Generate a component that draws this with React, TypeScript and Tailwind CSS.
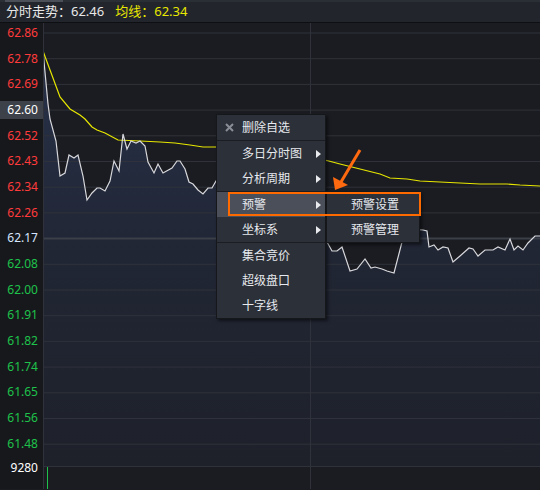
// page-coordinate points, converted to the chart svg below
const pricePts: [number, number][] = [
  [43, 52], [48, 105], [50, 120], [56, 142], [60, 177], [65, 174], [69, 156], [74, 159], [78, 156],
  [83, 177], [87, 201], [92, 194], [97, 189], [100, 189], [105, 192], [110, 182], [114, 162],
  [119, 172], [123, 135], [127, 150], [131, 142], [136, 144], [140, 142], [145, 147], [148, 163],
  [154, 174], [158, 165], [163, 174], [172, 169], [177, 162], [180, 162], [185, 170], [189, 183],
  [193, 185], [198, 191], [203, 195], [208, 189], [212, 189], [216, 182], [260, 210], [300, 235],
  [327, 243], [332, 252], [337, 252], [342, 248], [350, 272], [357, 270], [365, 260], [371, 269],
  [375, 268], [382, 270], [387, 272], [394, 274], [402, 243], [405, 230], [423, 231], [427, 232],
  [429, 248], [434, 246], [438, 251], [443, 248], [448, 249], [453, 263], [460, 257], [469, 249],
  [473, 250], [478, 257], [485, 251], [493, 251], [498, 248], [505, 251], [510, 240], [514, 251],
  [518, 247], [523, 251], [528, 244], [535, 237], [540, 237],
];

const avgPts: [number, number][] = [
  [43, 52], [60, 98], [70, 110], [80, 116], [85, 120], [92, 128], [97, 131], [105, 134], [118, 141],
  [140, 142], [160, 143], [175, 144], [190, 146], [203, 148], [216, 148], [325, 161], [340, 165],
  [360, 170], [380, 175], [390, 179], [407, 180], [420, 182], [440, 183], [460, 184], [480, 185],
  [507, 185], [520, 186], [540, 187],
];

const labels = [
  { v: '62.86', c: 'text-[#ff3b3b]' },
  { v: '62.78', c: 'text-[#ff3b3b]' },
  { v: '62.69', c: 'text-[#ff3b3b]' },
  { v: '62.60', c: 'text-white bg-[#3d4149]' },
  { v: '62.52', c: 'text-[#ff3b3b]' },
  { v: '62.43', c: 'text-[#ff3b3b]' },
  { v: '62.34', c: 'text-[#ff3b3b]' },
  { v: '62.26', c: 'text-[#ff3b3b]' },
  { v: '62.17', c: 'text-[#d6e6ff]' },
  { v: '62.08', c: 'text-[#1ec24b]' },
  { v: '62.00', c: 'text-[#1ec24b]' },
  { v: '61.91', c: 'text-[#1ec24b]' },
  { v: '61.82', c: 'text-[#1ec24b]' },
  { v: '61.74', c: 'text-[#1ec24b]' },
  { v: '61.65', c: 'text-[#1ec24b]' },
  { v: '61.56', c: 'text-[#1ec24b]' },
  { v: '61.48', c: 'text-[#1ec24b]' },
];

const OX = 44;
const OY = 24;
const toSvg = (pts: [number, number][]) => pts.map(([x, y]) => `${x - OX},${y - OY}`).join(' ');

function Caret() {
  return <span className="w-0 h-0 border-y-[4px] border-y-transparent border-l-[5px] border-l-[#e8eaee]" />;
}

function MenuItem({ label, sub, active }: { label: string; sub?: boolean; active?: boolean }) {
  return (
    <div className={`h-[25px] flex items-center pl-[25px] pr-[4px] ${active ? 'bg-[#4a4f59]' : ''}`}>
      <span className="flex-1 text-[12px] text-[#e6e9ee]">{label}</span>
      {sub && <Caret />}
    </div>
  );
}

function Sep() {
  return <div className="h-px bg-[#1b1d22]" />;
}

export default function App() {
  const gridYs = Array.from({ length: 17 }, (_, i) => 34 + i * 25.7);

  return (
    <div
      className="relative w-[540px] h-[490px] overflow-hidden bg-[#1b1c21] select-none"
      style={{ fontFamily: '"Noto Sans", "Noto Sans CJK SC", sans-serif' }}
    >
      {/* tab strip */}
      <div className="h-[2px] flex bg-[#2a2e35]">
        <div className="w-[58px] ml-[5px] bg-[#4a4f58]" />
      </div>

      {/* header */}
      <div className="h-[21px] flex items-center gap-[11px] px-[6px] bg-[#22252c] border-b border-[#0e0f12] text-[13px]">
        <span className="text-[#e8e8e8]">分时走势：62.46</span>
        <span className="text-[#e8e800]">均线：62.34</span>
      </div>

      <div className="flex h-[466px]">
        {/* price axis */}
        <div className="w-[44px] shrink-0 bg-[#17181c] border-r border-[#2f323a] flex flex-col">
          <div className="-mt-[3px] flex flex-col">
            {labels.map((l) => (
              <div key={l.v} className="h-[25.7px] flex items-center">
                <span className={`w-full h-[18px] flex items-center justify-end pr-[5px] text-[12px] ${l.c}`}>{l.v}</span>
              </div>
            ))}
            <div className="h-[22px] flex items-center justify-end pr-[5px] text-[12px] text-white">9280</div>
          </div>
        </div>

        {/* chart */}
        <svg width={496} height={466} className="shrink-0">
          <defs>
            <linearGradient id="fill" x1="0" y1="0" x2="0" y2="1">
              <stop offset="0" stopColor="#27314a" />
              <stop offset="0.5" stopColor="#212634" />
              <stop offset="1" stopColor="#1e212a" />
            </linearGradient>
          </defs>
          <polygon
            points={`${toSvg(pricePts)} ${540 - OX},${467 - OY} ${43 - OX},${467 - OY}`}
            fill="url(#fill)"
          />
          {gridYs.map((y, i) =>
            i === 8 ? null : (
              <line key={i} x1={0} x2={496} y1={y - OY} y2={y - OY} stroke="#2f323a" strokeWidth={1} />
            ),
          )}
          <line x1={0} x2={496} y1={239.5 - OY} y2={239.5 - OY} stroke="#3b3f48" strokeWidth={2} />
          <line x1={0} x2={496} y1={467.5 - OY} y2={467.5 - OY} stroke="#2f323a" strokeWidth={1} />
          <line x1={310.5 - OX} x2={310.5 - OX} y1={0} y2={466} stroke="#2f323a" strokeWidth={1} />
          <polyline points={toSvg(avgPts)} fill="none" stroke="#e6e600" strokeWidth={1.2} />
          <polyline points={toSvg(pricePts)} fill="none" stroke="#d8d8dc" strokeWidth={1.2} />
          <line x1={47.5 - OX} x2={47.5 - OX} y1={468 - OY} y2={466} stroke="#1ec24b" strokeWidth={1} />
        </svg>
      </div>

      {/* context menu */}
      <div className="absolute left-[216px] top-[114px] w-[110px] bg-[#2c3038] border border-[#15171a] shadow-[2px_2px_3px_rgba(0,0,0,0.5)]">
        <div className="h-[25px] flex items-center pl-[8px] gap-[8px]">
          <svg width="9" height="9" viewBox="0 0 9 9">
            <path d="M1 1 L8 8 M8 1 L1 8" stroke="#8a8e96" strokeWidth="2" />
          </svg>
          <span className="text-[12px] text-[#e6e9ee]">删除自选</span>
        </div>
        <Sep />
        <MenuItem label="多日分时图" sub />
        <MenuItem label="分析周期" sub />
        <Sep />
        <MenuItem label="预警" sub active />
        <MenuItem label="坐标系" sub />
        <Sep />
        <MenuItem label="集合竞价" />
        <MenuItem label="超级盘口" />
        <MenuItem label="十字线" />
      </div>

      {/* sub menu */}
      <div className="absolute left-[326px] top-[191px] w-[94px] bg-[#2c3038] border border-[#15171a] shadow-[2px_2px_3px_rgba(0,0,0,0.5)]">
        <div className="h-[25px] flex items-center justify-center pl-[4px] text-[12px] text-[#e6e9ee]">预警设置</div>
        <div className="h-[25px] flex items-center justify-center pl-[4px] text-[12px] text-[#e6e9ee]">预警管理</div>
      </div>

      {/* highlight box */}
      <div className="absolute left-[228px] top-[192px] w-[193px] h-[24px] border-2 border-[#ff6a00]" />

      {/* arrow */}
      <svg className="absolute left-[325px] top-[145px]" width="45" height="50" viewBox="0 0 45 50">
        <line x1="35" y1="5" x2="16" y2="37" stroke="#ff6a10" strokeWidth="3" />
        <polygon points="10,45 8,32 23,40" fill="#ff6a10" />
      </svg>
    </div>
  );
}
